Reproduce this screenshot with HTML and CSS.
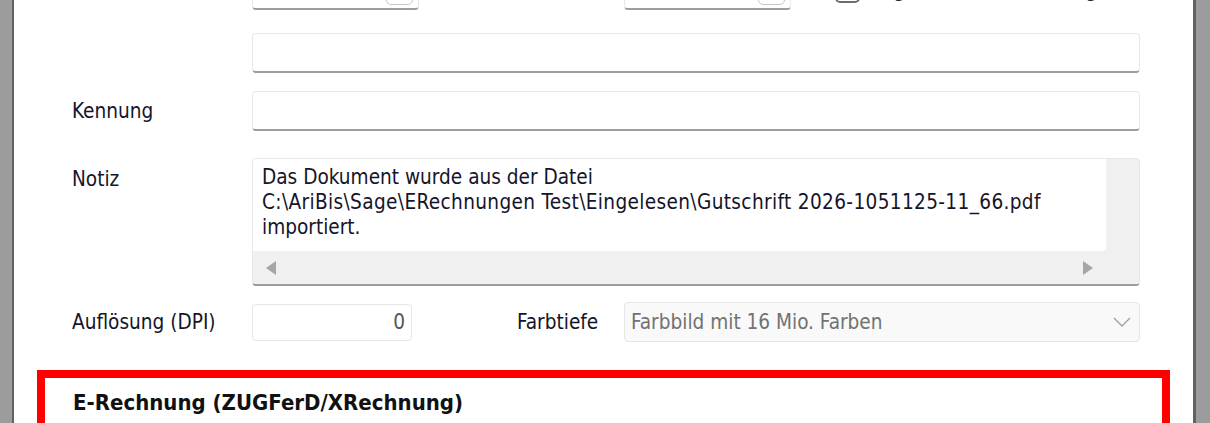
FILE: index.html
```html
<!DOCTYPE html>
<html lang="de">
<head>
    <meta charset="UTF-8">
    <title>Dokument</title>
    <link rel="stylesheet" href="styles.css">
</head>
<body>
    <div class="frame">
        <div class="dialog">
            <div class="form">
                <div class="row row-top">
                    <div class="label"></div>
                    <div class="pair">
                        <div class="input date"><span class="drop"></span></div>
                        <span class="sublabel">Eingang</span>
                        <div class="input date"><span class="drop"></span></div>
                        <div class="check"><span class="box"></span><span>Abgleich mit Bank erfolgt</span></div>
                    </div>
                </div>
                <div class="row row-1">
                    <div class="label"></div>
                    <div class="input"></div>
                </div>
                <div class="row row-2">
                    <div class="label">Kennung</div>
                    <div class="input"></div>
                </div>
                <div class="row row-3">
                    <div class="label label-top">Notiz</div>
                    <div class="memo">
                        <div class="memo-text">Das Dokument wurde aus der Datei<br><span class="path">C:\AriBis\Sage\ERechnungen Test\Eingelesen\Gutschrift 2026-1051125-11_66.pdf</span><br>importiert.</div>
                        <div class="memo-vbar"></div>
                        <div class="memo-hbar">
                            <svg width="12" height="14" viewBox="0 0 12 14"><polygon points="11,0 11,14 1,7" fill="#a6a6a6"/></svg>
                            <svg width="12" height="14" viewBox="0 0 12 14"><polygon points="1,0 1,14 11,7" fill="#a6a6a6"/></svg>
                        </div>
                        <div class="memo-corner"></div>
                    </div>
                </div>
                <div class="row row-4">
                    <div class="label">Auflösung (DPI)</div>
                    <div class="pair2">
                        <div class="input num">0</div>
                        <span class="sublabel2">Farbtiefe</span>
                        <div class="select">
                            <span>Farbbild mit 16 Mio. Farben</span>
                            <svg width="18" height="10" viewBox="0 0 18 10"><polyline points="1,1 9,9 17,1" fill="none" stroke="#a0a0a0" stroke-width="1.3"/></svg>
                        </div>
                    </div>
                </div>
            </div>
            <div class="erech">
                <div class="erech-title">E-Rechnung (ZUGFerD/XRechnung)</div>
            </div>
        </div>
    </div>
</body>
</html>
```

FILE: styles.css
```css
* {
    margin: 0;
    padding: 0;
    box-sizing: border-box;
}
html, body {
    height: 100%;
    overflow: hidden;
}
body {
    background-color: #9c9c9c;
    font-family: "DejaVu Sans Condensed", "DejaVu Sans", sans-serif;
    font-size: 20.6px;
    color: #15152a;
}
.frame {
    height: 100%;
    padding: 0 14px 0 12px;
}
.dialog {
    height: 100%;
    background-color: #fff;
    border-left: 2px solid #626262;
    border-right: 3px solid #626262;
    overflow: hidden;
}
.form {
    margin-top: -30px;
    padding: 0 53px 0 58px;
}
.row {
    display: grid;
    grid-template-columns: 180px 1fr;
    align-items: center;
}
.row-1 { margin-top: 23px; }
.row-2 { margin-top: 18px; }
.row-3 { margin-top: 27px; align-items: start; }
.row-4 { margin-top: 16px; }
.label {
    line-height: 25px;
}
.label-top {
    padding-top: 9px;
}
.input {
    position: relative;
    height: 40px;
    border: 1px solid #e8e8e8;
    border-bottom: 2px solid #9d9d9d;
    border-radius: 4px;
    background-color: #fff;
}
.pair {
    display: grid;
    grid-template-columns: 167px 205px 167px 1fr;
    align-items: end;
}
.sublabel {
    padding-left: 40px;
    line-height: 25px;
    margin-bottom: 10px;
}
.drop {
    position: absolute;
    right: 5px;
    top: 6px;
    width: 27px;
    height: 28px;
    border: 1px solid #c9c9c9;
    border-radius: 5px;
}
.check {
    display: flex;
    align-items: center;
    gap: 9px;
    padding-left: 44px;
    margin-bottom: 7px;
    line-height: 25px;
}
.check .box {
    width: 25px;
    height: 25px;
    border: 2px solid #6d6d6d;
    border-radius: 5px;
}
.memo {
    display: grid;
    grid-template-columns: 1fr 33px;
    grid-template-rows: 92px 33px;
    height: 128px;
    border: 1px solid #e8e8e8;
    border-bottom: 2px solid #9d9d9d;
    border-radius: 4px;
    background-color: #f0f0f0;
    overflow: hidden;
}
.memo-text {
    background-color: #fff;
    padding: 6px 0 0 9px;
    line-height: 25px;
    white-space: nowrap;
    border-bottom-right-radius: 4px;
}
.path {
    letter-spacing: 0.35px;
}
.memo-vbar {
    background-color: #f0f0f0;
}
.memo-hbar {
    display: flex;
    justify-content: space-between;
    align-items: center;
    padding: 0 12px 0 12px;
}
.memo-corner {
    background-color: #f0f0f0;
}
.pair2 {
    display: grid;
    grid-template-columns: 160px 212px 1fr;
    align-items: center;
}
.num {
    height: 37px;
    border: 1px solid #e6e6e6;
    border-radius: 4px;
    text-align: right;
    padding-right: 6px;
    line-height: 35px;
    color: #555;
}
.sublabel2 {
    padding-left: 105px;
}
.select {
    display: flex;
    align-items: center;
    justify-content: space-between;
    height: 40px;
    padding: 0 8px 0 6px;
    border: 1px solid #e6e6e6;
    border-radius: 4px;
    background-color: #f9f9f9;
    color: #727272;
}
.erech {
    margin: 28px 23px 0 23px;
    height: 200px;
    border: 8px solid #ff0000;
    border-bottom: none;
    padding: 12px 0 0 28px;
}
.erech-title {
    font-weight: bold;
    font-size: 22px;
    line-height: 26px;
    color: #111;
}
```
